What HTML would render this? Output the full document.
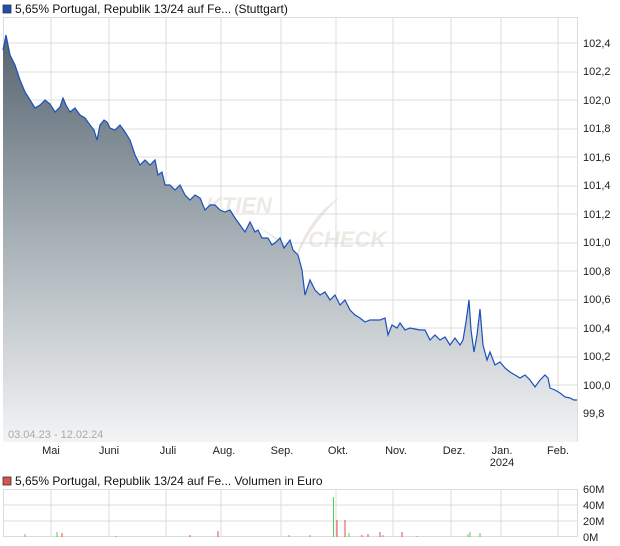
<!DOCTYPE html>
<html><head><meta charset="utf-8"><style>
html,body{margin:0;padding:0;background:#fff;width:620px;height:546px;overflow:hidden}
svg{display:block}
text{font-family:"Liberation Sans",sans-serif;font-size:11px;fill:#222}
.t{font-size:12px;fill:#111}
</style></head><body>
<svg width="620" height="546" viewBox="0 0 620 546">
<defs><linearGradient id="g" x1="0" y1="0" x2="0" y2="1">
<stop offset="0" stop-color="#56646f"/><stop offset="0.5" stop-color="#a7b0b6"/><stop offset="1" stop-color="#f3f4f5"/></linearGradient></defs>
<rect x="3" y="5" width="8" height="8" fill="#1e4fb5" stroke="#333" stroke-width="0.8"/>
<text class="t" x="15" y="13">5,65% Portugal, Republik 13/24 auf Fe... (Stuttgart)</text>
<g stroke="#dcdcdc" stroke-width="1">
<rect x="3.5" y="17.5" width="574" height="424" fill="#fff"/>
<path d="M51 17V442M109 17V442M166 17V442M221 17V442M281 17V442M336 17V442M393 17V442M451 17V442M501 17V442M558 17V442"/>
<path d="M3 43H578M3 72H578M3 100H578M3 129H578M3 157H578M3 186H578M3 214H578M3 243H578M3 271H578M3 300H578M3 328H578M3 357H578M3 385H578M3 414H578"/>
</g>
<g opacity="0.5" fill="#d8d0c4">
<text x="190" y="213" style="font-size:22px;font-style:italic;fill:#ddd5ca;font-weight:bold">AKTIEN</text>
<text x="308" y="247" style="font-size:22px;font-style:italic;fill:#ddd5ca;font-weight:bold">CHECK</text>
<path d="M255 225 Q285 240 295 258 Q310 215 340 197 Q310 225 295 262 Q280 240 255 225Z"/>
</g>
<path fill="url(#g)" stroke="none" d="M3 442 L3 50 6 35 10 55 15 65 20 80 25 92 30 100 35 108 40 105 45 100 50 104 55 112 60 107 63 98 66 105 70 112 75 108 80 115 85 118 90 125 94 130 97 140 100 125 104 120 107 122 110 128 115 130 120 125 125 132 130 140 135 155 140 165 145 160 150 165 155 160 158 175 162 172 165 185 170 185 175 190 180 185 185 195 190 200 195 195 200 198 205 210 210 205 215 205 220 210 225 212 230 210 235 218 240 225 245 232 250 222 255 232 258 230 262 238 268 238 272 245 276 242 280 238 284 248 290 240 293 250 298 255 302 270 305 295 310 280 315 290 320 295 325 292 330 300 335 295 340 305 345 300 350 310 355 315 360 318 365 322 370 320 380 320 385 318 388 335 392 325 397 328 400 323 405 330 410 328 420 330 425 330 430 340 435 335 440 340 445 337 450 345 455 338 460 345 463 340 466 322 469 300 471 330 474 352 477 335 480 309 483 345 487 360 490 352 495 365 500 362 505 368 510 372 515 375 520 378 525 375 530 380 535 387 540 380 545 375 548 378 550 388 555 390 560 393 565 397 570 398 574 400 577 400 L577 442Z"/>
<polyline fill="none" stroke="#1a4fbd" stroke-width="1.2" points="3,50 6,35 10,55 15,65 20,80 25,92 30,100 35,108 40,105 45,100 50,104 55,112 60,107 63,98 66,105 70,112 75,108 80,115 85,118 90,125 94,130 97,140 100,125 104,120 107,122 110,128 115,130 120,125 125,132 130,140 135,155 140,165 145,160 150,165 155,160 158,175 162,172 165,185 170,185 175,190 180,185 185,195 190,200 195,195 200,198 205,210 210,205 215,205 220,210 225,212 230,210 235,218 240,225 245,232 250,222 255,232 258,230 262,238 268,238 272,245 276,242 280,238 284,248 290,240 293,250 298,255 302,270 305,295 310,280 315,290 320,295 325,292 330,300 335,295 340,305 345,300 350,310 355,315 360,318 365,322 370,320 380,320 385,318 388,335 392,325 397,328 400,323 405,330 410,328 420,330 425,330 430,340 435,335 440,340 445,337 450,345 455,338 460,345 463,340 466,322 469,300 471,330 474,352 477,335 480,309 483,345 487,360 490,352 495,365 500,362 505,368 510,372 515,375 520,378 525,375 530,380 535,387 540,380 545,375 548,378 550,388 555,390 560,393 565,397 570,398 574,400 577,400"/>
<text x="8" y="438" style="fill:#aaa">03.04.23 - 12.02.24</text>
<g>
<text x="583" y="47">102,4</text><text x="583" y="75">102,2</text><text x="583" y="104">102,0</text><text x="583" y="132">101,8</text><text x="583" y="161">101,6</text><text x="583" y="189">101,4</text><text x="583" y="218">101,2</text><text x="583" y="246">101,0</text><text x="583" y="275">100,8</text><text x="583" y="303">100,6</text><text x="583" y="332">100,4</text><text x="583" y="360">100,2</text><text x="583" y="389">100,0</text><text x="583" y="417">99,8</text>
</g>
<g text-anchor="middle">
<text x="51" y="454">Mai</text><text x="109" y="454">Juni</text><text x="168" y="454">Juli</text><text x="224" y="454">Aug.</text><text x="282" y="454">Sep.</text><text x="338" y="454">Okt.</text><text x="396" y="454">Nov.</text><text x="454" y="454">Dez.</text><text x="502" y="454">Jan.</text><text x="558" y="454">Feb.</text><text x="502" y="466">2024</text>
</g>
<rect x="3" y="477" width="8" height="8" fill="#d9534f" stroke="#333" stroke-width="0.8"/>
<text class="t" x="15" y="485">5,65% Portugal, Republik 13/24 auf Fe... Volumen in Euro</text>
<g stroke="#dcdcdc" stroke-width="1">
<rect x="3.5" y="489.5" width="574" height="47" fill="#fff"/>
<path d="M51 489V537M109 489V537M166 489V537M221 489V537M281 489V537M336 489V537M393 489V537M451 489V537M501 489V537M558 489V537M3 505H578M3 521H578"/>
</g>
<g stroke-width="1">
<path stroke="#4cd44c" d="M25 537V534M57 537V532M289 537V535M310 537V535M333.5 537V497M349 537V533M417 537V536M468 537V534M470 537V532M480 537V533"/>
<path stroke="#e04848" d="M62 537V533M190 537V535M218 537V531M337 537V520M345 537V520M362 537V535M368 537V534M380 537V532M402 537V532"/>
<path stroke="#999" d="M116 537V536M383 537V535"/>
</g>
<text x="583" y="493">60M</text><text x="583" y="509">40M</text><text x="583" y="525">20M</text><text x="583" y="541">0M</text>
</svg>
</body></html>
